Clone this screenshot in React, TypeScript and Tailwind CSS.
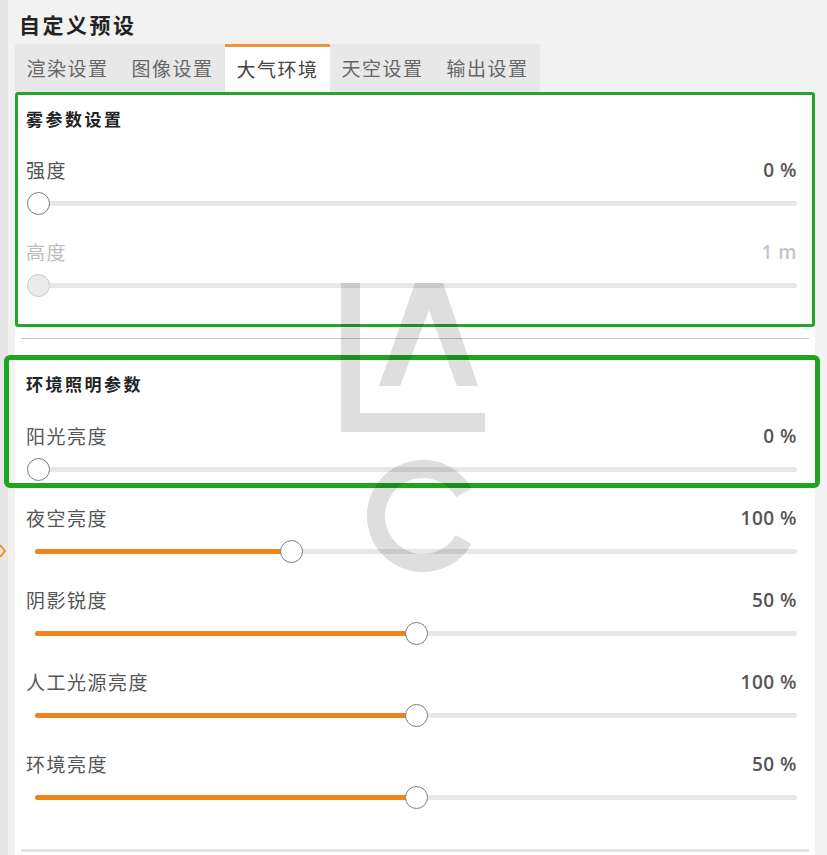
import React from 'react'

type Row = {
  label: string
  value: string
  thumb: number // thumb centre, page x
  disabled?: boolean
}

const fogRows: Row[] = [
  { label: '强度', value: '0 %', thumb: 38 },
  { label: '高度', value: '1 m', thumb: 38, disabled: true },
]

const lightRows: Row[] = [
  { label: '阳光亮度', value: '0 %', thumb: 38 },
  { label: '夜空亮度', value: '100 %', thumb: 291 },
  { label: '阴影锐度', value: '50 %', thumb: 416 },
  { label: '人工光源亮度', value: '100 %', thumb: 416 },
  { label: '环境亮度', value: '50 %', thumb: 416 },
]

const tabs = ['渲染设置', '图像设置', '大气环境', '天空设置', '输出设置']

function SliderRow({ row }: { row: Row }) {
  // content area starts at page x 26, track fill starts at x 35
  const fill = row.disabled ? 0 : Math.max(0, row.thumb - 35)
  return (
    <div className="flex h-[82px] flex-col">
      <div className="flex h-6 items-center justify-between">
        <span
          className={
            'text-[19px] tracking-[1.5px] ' +
            (row.disabled ? 'text-[#bcbcbc]' : 'text-[#555]')
          }
        >
          {row.label}
        </span>
        <span
          className={
            "font-['Open_Sans',sans-serif] text-[19px] font-semibold tracking-[0.5px] " +
            (row.disabled ? 'text-[#c4c4c4]' : 'text-[#555]')
          }
        >
          {row.value}
        </span>
      </div>
      <div className="relative mt-[9px] h-6">
        <div className="absolute left-[9px] right-0 top-[10px] h-[5px] rounded-full bg-[#e7e7e7]" />
        {fill > 0 && (
          <div
            className="absolute left-[9px] top-[10px] h-[5px] rounded-full bg-[#f2821a]"
            style={{ width: fill }}
          />
        )}
        <div
          className={
            'absolute top-[0.5px] h-[23px] w-[23px] rounded-full border-[1.5px] ' +
            (row.disabled ? 'border-[#c9c9c9] bg-[#ebebeb]' : 'border-[#7c7c7c] bg-white')
          }
          style={{ left: row.thumb - 26 - 11.5 }}
        />
      </div>
    </div>
  )
}

export default function App() {
  return (
    <div className="relative flex h-[855px] w-[827px] overflow-hidden bg-[#f2f2f2] font-['Noto_Sans_CJK_SC',sans-serif]">
      <div className="h-full w-[8px] bg-[#e7e7e7]" />

      <div className="flex flex-col">
        <div className="mt-[9px] h-[30px] pl-[11px] text-[21px] font-bold leading-[30px] tracking-[2.5px] text-[#222]">
          自定义预设
        </div>

        {/* tabs */}
        <div className="ml-[7px] mt-[5px] flex h-[48px] w-[525px] bg-[#e8e8e8]">
          {tabs.map((t) => (
            <div
              key={t}
              className={
                'flex w-[105px] items-center justify-center text-[19px] tracking-[1.5px] ' +
                (t === '大气环境'
                  ? 'border-t-[3px] border-[#ef9535] bg-white text-[#444]'
                  : 'text-[#666]')
              }
            >
              {t}
            </div>
          ))}
        </div>

        {/* panel */}
        <div className="ml-[7px] flex w-[800px] flex-1 flex-col bg-white">
          <div className="rounded-[3px] border-[3px] border-[#26a52b] pb-[2px] pl-[8px] pr-[15px] pt-[12px]">
            <div className="h-6 text-[17px] font-bold leading-6 tracking-[2.5px] text-[#222]">
              雾参数设置
            </div>
            <div className="mt-[27px]">
              {fogRows.map((r) => (
                <SliderRow key={r.label} row={r} />
              ))}
            </div>
          </div>

          <div className="mx-[6px] mt-[11px] h-px bg-[#c6c6c6]" />

          <div className="relative pl-[11px] pr-[18px] pt-[33px]">
            <div className="h-6 text-[17px] font-bold leading-6 tracking-[2.5px] text-[#222]">
              环境照明参数
            </div>
            <div className="mt-[28px]">
              {lightRows.map((r) => (
                <SliderRow key={r.label} row={r} />
              ))}
            </div>
            {/* highlight box */}
            <div className="pointer-events-none absolute -left-[11px] -right-[5px] top-[16px] h-[133px] rounded-[6px] border-[5px] border-[#1ea51f]" />
          </div>

          <div className="mx-[6px] mt-[15px] h-[3px] bg-[#e5e5e5]" />
        </div>
      </div>

      {/* left edge chevron */}
      <svg className="absolute left-0 top-[543px]" width="8" height="16" viewBox="0 0 8 16">
        <polyline points="0,2 5,8 0,14" fill="none" stroke="#f0922e" strokeWidth="2" />
      </svg>

      {/* watermark */}
      <svg className="pointer-events-none absolute left-0 top-0" width="827" height="855">
        <g opacity="0.125" fill="#000">
          <rect x="341" y="283" width="19" height="149" />
          <rect x="341" y="413" width="144" height="19" />
          <polygon points="379,386 415,283 443,283 478,386 457,386 429,310 400,386" />
          <circle
            cx="423"
            cy="516"
            r="47"
            fill="none"
            stroke="#000"
            strokeWidth="18"
            strokeDasharray="246 49"
            transform="rotate(30 423 516)"
          />
        </g>
      </svg>
    </div>
  )
}
